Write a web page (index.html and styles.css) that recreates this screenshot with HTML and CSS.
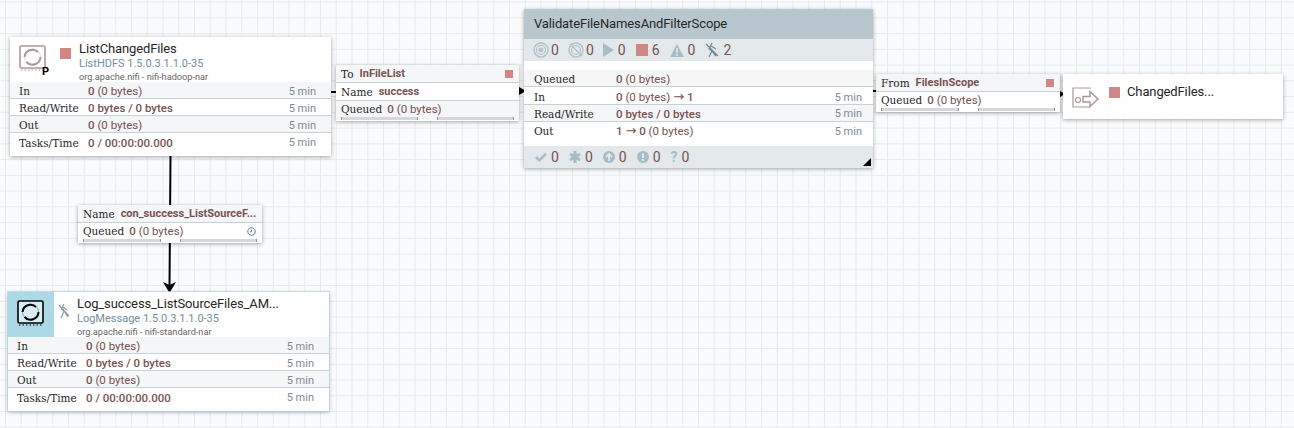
FILE: index.html
```html
<!DOCTYPE html>
<html lang="en">
<head>
    <meta charset="UTF-8">
    <meta name="viewport" content="width=device-width, initial-scale=1.0">
    <title>NiFi Flow</title>
    <link rel="stylesheet" href="styles.css">
</head>
<body>
    <div class="canvas">
        <svg class="links" width="1294" height="428">
            <path d="M331 92H337M519 91H525M873 91H877M1060 94H1064M170.500 156L169.500 286" fill="none" stroke="#000" stroke-width="2"/>
            <path d="M519 87L526 91L519 95ZM1060 91L1065 94L1060 97ZM163 282L169.500 293L176 282L169.500 285Z" fill="#000"/>
        </svg>

        <div class="node proc proc-list">
            <div class="proc-head">
                <div class="proc-icon">
                    <svg width="27" height="26" viewBox="0 0 27 26"><rect x="1" y="1" width="25" height="22" rx="1.500" fill="none" stroke="#ad9897" stroke-width="1.600"/><circle cx="13.500" cy="12" r="8" fill="none" stroke="#e4dcdb"/><path d="M5.500 12a8 8 0 0 1 13.500-5" fill="none" stroke="#ad9897" stroke-width="2"/><path d="M21.500 12a8 8 0 0 1-14 5" fill="none" stroke="#ad9897" stroke-width="2"/><path d="M2 25h23" stroke="#ad9897" stroke-dasharray="1.500 2"/></svg>
                    <span class="primary">P</span>
                </div>
                <span class="stop proc-state"></span>
                <div class="proc-names">
                    <div class="proc-title">ListChangedFiles</div>
                    <div class="proc-type">ListHDFS 1.5.0.3.1.1.0-35</div>
                    <div class="proc-bundle">org.apache.nifi - nifi-hadoop-nar</div>
                </div>
            </div>
            <div class="row alt"><span class="lbl">In</span><span class="val"><b>0</b> (0 bytes)</span><span class="time">5 min</span></div>
            <div class="row"><span class="lbl">Read/Write</span><span class="val"><b>0 bytes / 0 bytes</b></span><span class="time">5 min</span></div>
            <div class="row alt"><span class="lbl">Out</span><span class="val"><b>0</b> (0 bytes)</span><span class="time">5 min</span></div>
            <div class="row last"><span class="lbl">Tasks/Time</span><span class="val"><b>0 / 00:00:00.000</b></span><span class="time">5 min</span></div>
        </div>

        <div class="node proc proc-log">
            <div class="proc-head">
                <div class="proc-icon blue">
                    <svg width="27" height="26" viewBox="0 0 27 26"><rect x="1" y="1" width="25" height="22" rx="1.500" fill="#d9edf4" stroke="#000" stroke-width="1.600"/><circle cx="13.500" cy="12" r="8" fill="none" stroke="#8fa5ad"/><path d="M5.500 12a8 8 0 0 1 13.500-5" fill="none" stroke="#000" stroke-width="2"/><path d="M21.500 12a8 8 0 0 1-14 5" fill="none" stroke="#000" stroke-width="2"/><path d="M2 25h23" stroke="#000" stroke-dasharray="1.500 2"/></svg>
                </div>
                <svg class="proc-state invalid" width="12" height="16" viewBox="0 0 12 16"><path d="M6 1L3.500 6L6 8L3 15M6 8L10 14M1 2L11 13M5 4L9 7" fill="none" stroke="#8c9ba3" stroke-width="1.200"/></svg>
                <div class="proc-names">
                    <div class="proc-title">Log_success_ListSourceFiles_AM...</div>
                    <div class="proc-type">LogMessage 1.5.0.3.1.1.0-35</div>
                    <div class="proc-bundle">org.apache.nifi - nifi-standard-nar</div>
                </div>
            </div>
            <div class="row alt"><span class="lbl">In</span><span class="val"><b>0</b> (0 bytes)</span><span class="time">5 min</span></div>
            <div class="row"><span class="lbl">Read/Write</span><span class="val"><b>0 bytes / 0 bytes</b></span><span class="time">5 min</span></div>
            <div class="row alt"><span class="lbl">Out</span><span class="val"><b>0</b> (0 bytes)</span><span class="time">5 min</span></div>
            <div class="row last"><span class="lbl">Tasks/Time</span><span class="val"><b>0 / 00:00:00.000</b></span><span class="time">5 min</span></div>
        </div>

        <div class="node conn conn-in">
            <div class="conn-row alt"><span class="lbl">To</span><b class="conn-name">InFileList</b><span class="stop small"></span></div>
            <div class="conn-row"><span class="lbl">Name</span><b class="conn-name">success</b></div>
            <div class="conn-row alt queued"><span class="lbl">Queued</span><span class="val"><b>0</b> (0 bytes)</span></div>
            <div class="bars alt"><span class="bar"></span><span class="bar"></span></div>
        </div>

        <div class="node conn conn-out">
            <div class="conn-row alt"><span class="lbl">From</span><b class="conn-name">FilesInScope</b><span class="stop small"></span></div>
            <div class="conn-row queued"><span class="lbl">Queued</span><span class="val"><b>0</b> (0 bytes)</span></div>
            <div class="bars"><span class="bar"></span><span class="bar"></span></div>
        </div>

        <div class="node conn conn-log">
            <div class="conn-row alt"><span class="lbl">Name</span><b class="conn-name">con_success_ListSourceF...</b></div>
            <div class="conn-row queued"><span class="lbl">Queued</span><span class="val"><b>0</b> (0 bytes)</span>
                <svg class="clock" width="9" height="9" viewBox="0 0 9 9"><circle cx="4.500" cy="4.500" r="3.700" fill="none" stroke="#728e9b" stroke-width="1.100"/><path d="M4.500 2.500V4.800H3" fill="none" stroke="#728e9b"/></svg>
            </div>
            <div class="bars"><span class="bar"></span><span class="bar"></span></div>
        </div>

        <div class="node group">
            <div class="group-title">ValidateFileNamesAndFilterScope</div>
            <div class="group-bar top">
                <span class="stat tight">
                    <svg width="16" height="16" viewBox="0 0 16 16"><g fill="none" stroke="#b4c4cb"><circle cx="8" cy="8" r="7" stroke-width="1.500"/><circle cx="8" cy="8" r="4.500" stroke-width="1.200"/><circle cx="8" cy="8" r="2" fill="#b4c4cb"/></g></svg>0
                </span>
                <span class="stat tight">
                    <svg width="16" height="16" viewBox="0 0 16 16"><g fill="none" stroke="#b4c4cb"><circle cx="8" cy="8" r="7" stroke-width="1.500"/><circle cx="8" cy="8" r="4.500" stroke-width="1.200"/><path d="M2 2L14 14" stroke-width="1.500"/></g></svg>0
                </span>
                <span class="stat">
                    <svg width="11" height="14" viewBox="0 0 11 14"><path d="M0 0L11 7L0 14Z" fill="#a9bcc5"/></svg>0
                </span>
                <span class="stat"><span class="stop"></span>6</span>
                <span class="stat">
                    <svg width="14" height="13" viewBox="0 0 14 13"><path d="M7 0L14 13H0Z" fill="#a9bcc5"/><path d="M7 4V9M7 10V12" stroke="#e3e8eb" stroke-width="1.500"/></svg>0
                </span>
                <span class="stat">
                    <svg width="14" height="16" viewBox="0 0 14 16"><path d="M7 1L4 7L7 9L4 15M7 9L11 14M1 2L13 14M6 4L11 7" fill="none" stroke="#728e9b" stroke-width="1.300"/></svg>2
                </span>
            </div>
            <div class="group-body">
                <div class="row alt"><span class="lbl">Queued</span><span class="val"><b>0</b> (0 bytes)</span></div>
                <div class="row tall"><span class="lbl">In</span><span class="val"><b>0</b> (0 bytes) <span class="arrow">→</span> <b>1</b></span><span class="time">5 min</span></div>
                <div class="row alt snug"><span class="lbl">Read/Write</span><span class="val"><b>0 bytes / 0 bytes</b></span><span class="time">5 min</span></div>
                <div class="row last"><span class="lbl">Out</span><span class="val"><b>1 <span class="arrow">→</span> 0</b> (0 bytes)</span><span class="time">5 min</span></div>
            </div>
            <div class="group-bar bottom">
                <span class="stat">
                    <svg width="12" height="10" viewBox="0 0 14 12"><path d="M1 6L5 10L13 2" fill="none" stroke="#a9bcc5" stroke-width="3"/></svg>0
                </span>
                <span class="stat">
                    <svg width="12" height="12" viewBox="0 0 12 12"><path d="M6 0V12M1 3L11 9M11 3L1 9" stroke="#a9bcc5" stroke-width="3"/></svg>0
                </span>
                <span class="stat">
                    <svg width="12" height="12" viewBox="0 0 12 12"><circle cx="6" cy="6" r="6" fill="#a9bcc5"/><path d="M6 10V3M3 6L6 3L9 6" fill="none" stroke="#e3e8eb" stroke-width="1.800"/></svg>0
                </span>
                <span class="stat">
                    <svg width="12" height="12" viewBox="0 0 12 12"><circle cx="6" cy="6" r="6" fill="#a9bcc5"/><path d="M6 2.500V7M6 8V10" stroke="#e3e8eb" stroke-width="2"/></svg>0
                </span>
                <span class="stat"><span class="q">?</span>0</span>
            </div>
            <span class="corner"></span>
        </div>

        <div class="node port">
            <svg width="28" height="22" viewBox="0 0 28 22"><path d="M19 1H1V20H18" fill="none" stroke="#ad9897" stroke-width="1.200"/><circle cx="6" cy="13" r="2.500" fill="none" stroke="#ad9897" stroke-width="1.200"/><path d="M11 9.500H18V4.500L26 12L18 19.500V15H11Z" fill="#fff" stroke="#ad9897" stroke-width="1.500"/></svg>
            <span class="stop port-state"></span>
            <span class="port-name">ChangedFiles...</span>
        </div>
    </div>
</body>
</html>
```

FILE: styles.css
```css
* {
    box-sizing: border-box;
}
body {
    margin: 0;
    overflow: hidden;
    font-family: Roboto, sans-serif;
}
.canvas {
    position: relative;
    width: 1294px;
    height: 428px;
    background-color: #f9fbfd;
    background-image: linear-gradient(#e6ebee 1px, transparent 1px), linear-gradient(90deg, #e6ebee 1px, transparent 1px);
    background-size: 15.76px 15.76px;
    background-position: 5px 1.600px;
}
.links {
    position: absolute;
    left: 0;
    top: 0;
}
.node {
    position: absolute;
    background: #fff;
    box-shadow: 0 1px 4px rgba(0, 0, 0, 0.35);
}
.stop {
    display: block;
    flex: none;
    width: 11px;
    height: 11px;
    background: #d18686;
}
.stop.small {
    width: 8px;
    height: 8px;
    margin-left: auto;
}
.alt {
    background: #f4f6f7;
}
.lbl {
    font-family: "DejaVu Serif", serif;
    font-size: 10.500px;
    color: #262626;
}
.val {
    font-size: 11.500px;
    color: #775351;
}
.val b {
    font-weight: 500;
}
.conn-name {
    font-weight: 700;
}
.arrow {
    font-family: "DejaVu Sans", sans-serif;
    font-size: 13px;
    font-weight: 400;
    line-height: 1;
}

/* processors */
.proc {
    width: 321px;
    height: 119px;
}
.proc-list {
    left: 10px;
    top: 37px;
}
.proc-log {
    left: 8px;
    top: 292px;
    box-shadow: 0 0 0 1px rgba(173, 216, 230, 0.6), 0 1px 4px rgba(0, 0, 0, 0.35);
}
.proc-head {
    display: flex;
    height: 45px;
}
.proc-icon {
    position: relative;
    flex: none;
    width: 46px;
    padding: 8px 0 0 9px;
}
.proc-icon.blue {
    background: #add8e6;
}
.primary {
    position: absolute;
    left: 32px;
    top: 28px;
    font-size: 11px;
    font-weight: 700;
    color: #000;
}
.proc-state {
    flex: none;
    margin: 11px 8px 0 4px;
}
.proc-state.invalid {
    margin-right: 7px;
}
.proc-names {
    padding-top: 3px;
}
.proc-title {
    font-size: 13px;
    line-height: 17px;
    letter-spacing: -0.12px;
    color: #262626;
}
.proc-type {
    font-size: 11px;
    line-height: 13px;
    color: #728e9b;
}
.proc-bundle {
    font-size: 9.200px;
    line-height: 13px;
    color: #666;
}
.row {
    display: flex;
    align-items: center;
    height: 17px;
    padding: 2px 15px 0 9px;
    border-bottom: 1px solid #c7d2d7;
}
.row.last {
    border-bottom: 0;
    height: 22px;
    padding: 0 15px 3px 9px;
}
.row .lbl {
    flex: none;
    width: 69px;
}
.time {
    margin-left: auto;
    font-size: 11px;
    color: #7d8a90;
}

/* connection labels */
.conn {
    width: 184px;
    padding-bottom: 1px;
}
.conn-in {
    left: 336px;
    top: 65px;
    width: 183px;
}
.conn-out {
    left: 876px;
    top: 74px;
}
.conn-log {
    left: 78px;
    top: 205px;
}
.conn-row {
    display: flex;
    align-items: center;
    gap: 6px;
    height: 18px;
    padding: 0 6px 0 5px;
    border-bottom: 1px solid #c7d2d7;
}
.conn-row.queued {
    gap: 5px;
    border-bottom: 0;
    height: 16px;
}
.conn-name {
    font-size: 11px;
    color: #775351;
}
.clock {
    margin-left: auto;
}
.bars {
    display: flex;
    gap: 19px;
    height: 3px;
    padding: 0 5px;
}
.bar {
    flex: 1;
    height: 3px;
    background: #d4d8da;
    border-left: 1px solid #8d9599;
    border-right: 1px solid #8d9599;
}

/* process group */
.group {
    left: 524px;
    top: 9px;
    width: 349px;
    height: 159px;
}
.group-title {
    height: 30px;
    padding: 6px 10px 0;
    font-size: 13px;
    line-height: 17px;
    letter-spacing: -0.12px;
    background: #b8c6cd;
    color: #262626;
}
.group-bar {
    display: flex;
    align-items: center;
    gap: 10px;
    height: 22px;
    padding: 0 9px;
    background: #e3e8eb;
}
.group-bar.bottom {
    margin-top: 7px;
    padding-left: 11px;
}
.stat {
    display: flex;
    align-items: center;
    gap: 4px;
    font-size: 14px;
    color: #775351;
}
.stat.tight {
    gap: 2px;
    margin-right: -1px;
}
.stat .stop {
    width: 12px;
    height: 12px;
}
.q {
    font-weight: 700;
    color: #a9bcc5;
}
.group-body {
    padding-top: 9px;
}
.group-body .row {
    padding: 2px 11px 0 10px;
}
.group-body .row .lbl {
    width: 82px;
}
.group-body .row.tall {
    height: 18px;
    padding-top: 3px;
}
.group-body .row.snug {
    padding-top: 1px;
}
.group-body .row.last {
    height: 17px;
    padding-top: 1px;
    border-bottom: 0;
}
.corner {
    position: absolute;
    right: 2px;
    bottom: 2px;
    width: 0;
    height: 0;
    border-left: 8px solid transparent;
    border-bottom: 8px solid #000;
}

/* input port */
.port {
    left: 1063px;
    top: 74px;
    width: 220px;
    height: 45px;
    display: flex;
    align-items: flex-start;
    padding: 13px 0 0 9px;
}
.port-state {
    margin: 0 7px 0 9px;
}
.port-name {
    font-size: 13px;
    line-height: 10px;
    letter-spacing: -0.12px;
    color: #262626;
}
```
